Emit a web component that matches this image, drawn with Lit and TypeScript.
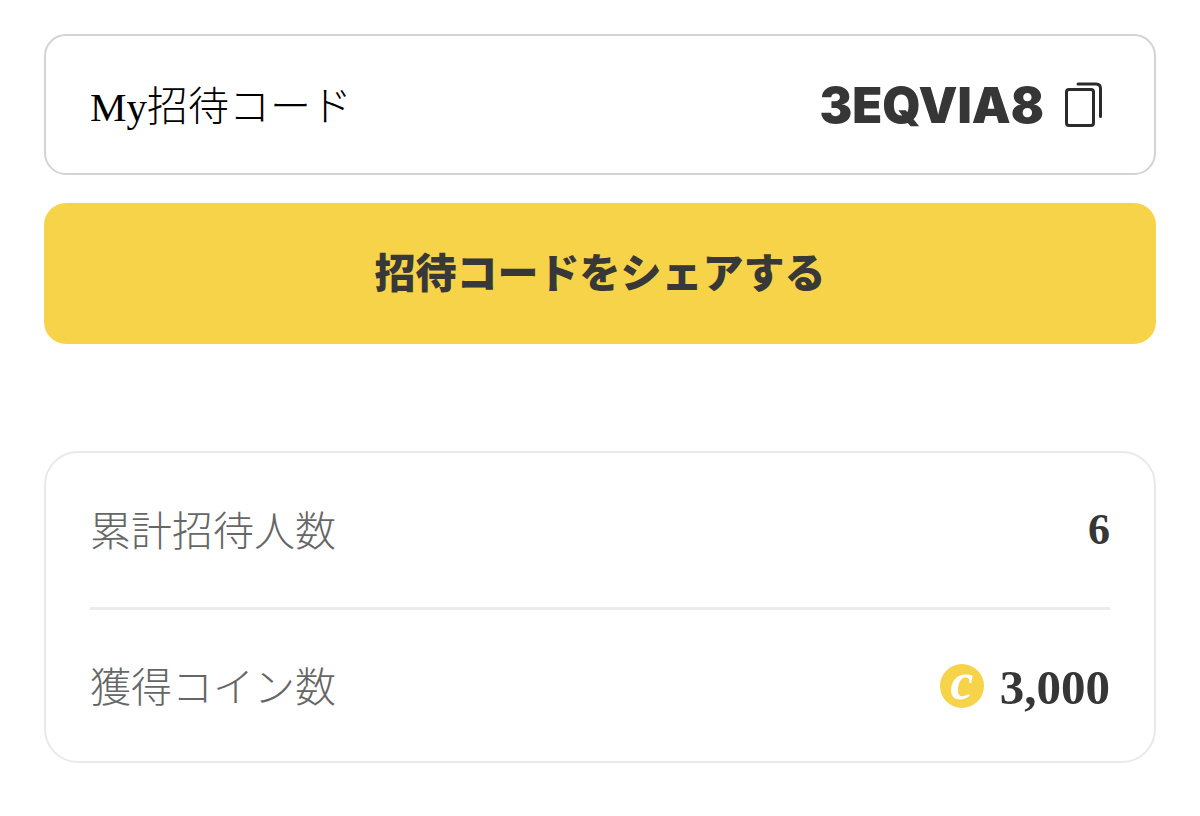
import { LitElement, html, css } from "lit";
import { customElement } from "lit/decorators.js";

@customElement("app-root")
export class AppRoot extends LitElement {
  static styles = css`
    :host { display: block; box-sizing: border-box; padding: 34px 44px 52px; background: #fff; color: #363636;
      font-family: "Liberation Serif", "Noto Sans CJK JP", serif; }
    *, *::before { box-sizing: border-box; }
    .code { display: flex; align-items: center; justify-content: space-between; min-height: 141px; padding: 0 44px;
      border: 2px solid #d3d3d3; border-radius: 22px; }
    .label { padding-top: 4px; font-size: 41px; line-height: 60px; font-weight: 300; color: #000; }
    .value { display: flex; align-items: center; gap: 20px; padding: 2px 6px 0 0; font: 900 49px/60px Inter, sans-serif; }
    .copy { display: block; padding: 0; border: 0; background: none; color: #2b2b2b; cursor: pointer; }
    svg { display: block; }
    .share { display: block; width: 100%; min-height: 141px; margin-top: 28px; padding: 0 0 8px; border: 0; border-radius: 22px;
      background: #f6d348; color: #383838; font: 900 41px/60px "Noto Sans CJK JP", sans-serif; cursor: pointer; }
    .stats { margin: 107px 0 0; padding: 0 44px; border: 2px solid #e9e9e9; border-radius: 34px; }
    .row { display: flex; align-items: center; justify-content: space-between; min-height: 154px; }
    .row + .row { border-top: 3px solid #ebebeb; }
    .row dt { padding-top: 4px; font-size: 41px; line-height: 60px; font-weight: 300; color: #666; }
    .row dd { display: flex; align-items: center; gap: 16px; margin: 0; font-size: 49px; line-height: 60px; font-weight: 700; }
    .row dd.count { font-size: 44px; }
    .coin { display: flex; justify-content: center; width: 44px; height: 44px; border-radius: 50%; background: #f6d348;
      color: #fff; font-size: 52px; line-height: 36px; font-style: italic; }
    .amount { padding-top: 4px; }
  `;

  render() {
    return html`
      <section class="code">
        <span class="label">My招待コード</span>
        <span class="value">3EQVIA8
          <button class="copy" type="button" aria-label="コピー">
            <svg width="40" height="48" viewBox="1 1 40 48" fill="none" stroke="currentColor" stroke-width="3" stroke-linecap="round">
              <rect x="3.500" y="8.500" width="27" height="36" rx="2.5"/><path d="M15 3H33Q37.500 3 37.500 7.500V35.500"/>
            </svg>
          </button>
        </span>
      </section>
      <button class="share" type="button">招待コードをシェアする</button>
      <dl class="stats">
        <div class="row"><dt>累計招待人数</dt><dd class="count">6</dd></div>
        <div class="row"><dt>獲得コイン数</dt><dd>
          <span class="coin" aria-hidden="true">c</span>
          <span class="amount">3,000</span></dd></div>
      </dl>
    `;
  }
}
